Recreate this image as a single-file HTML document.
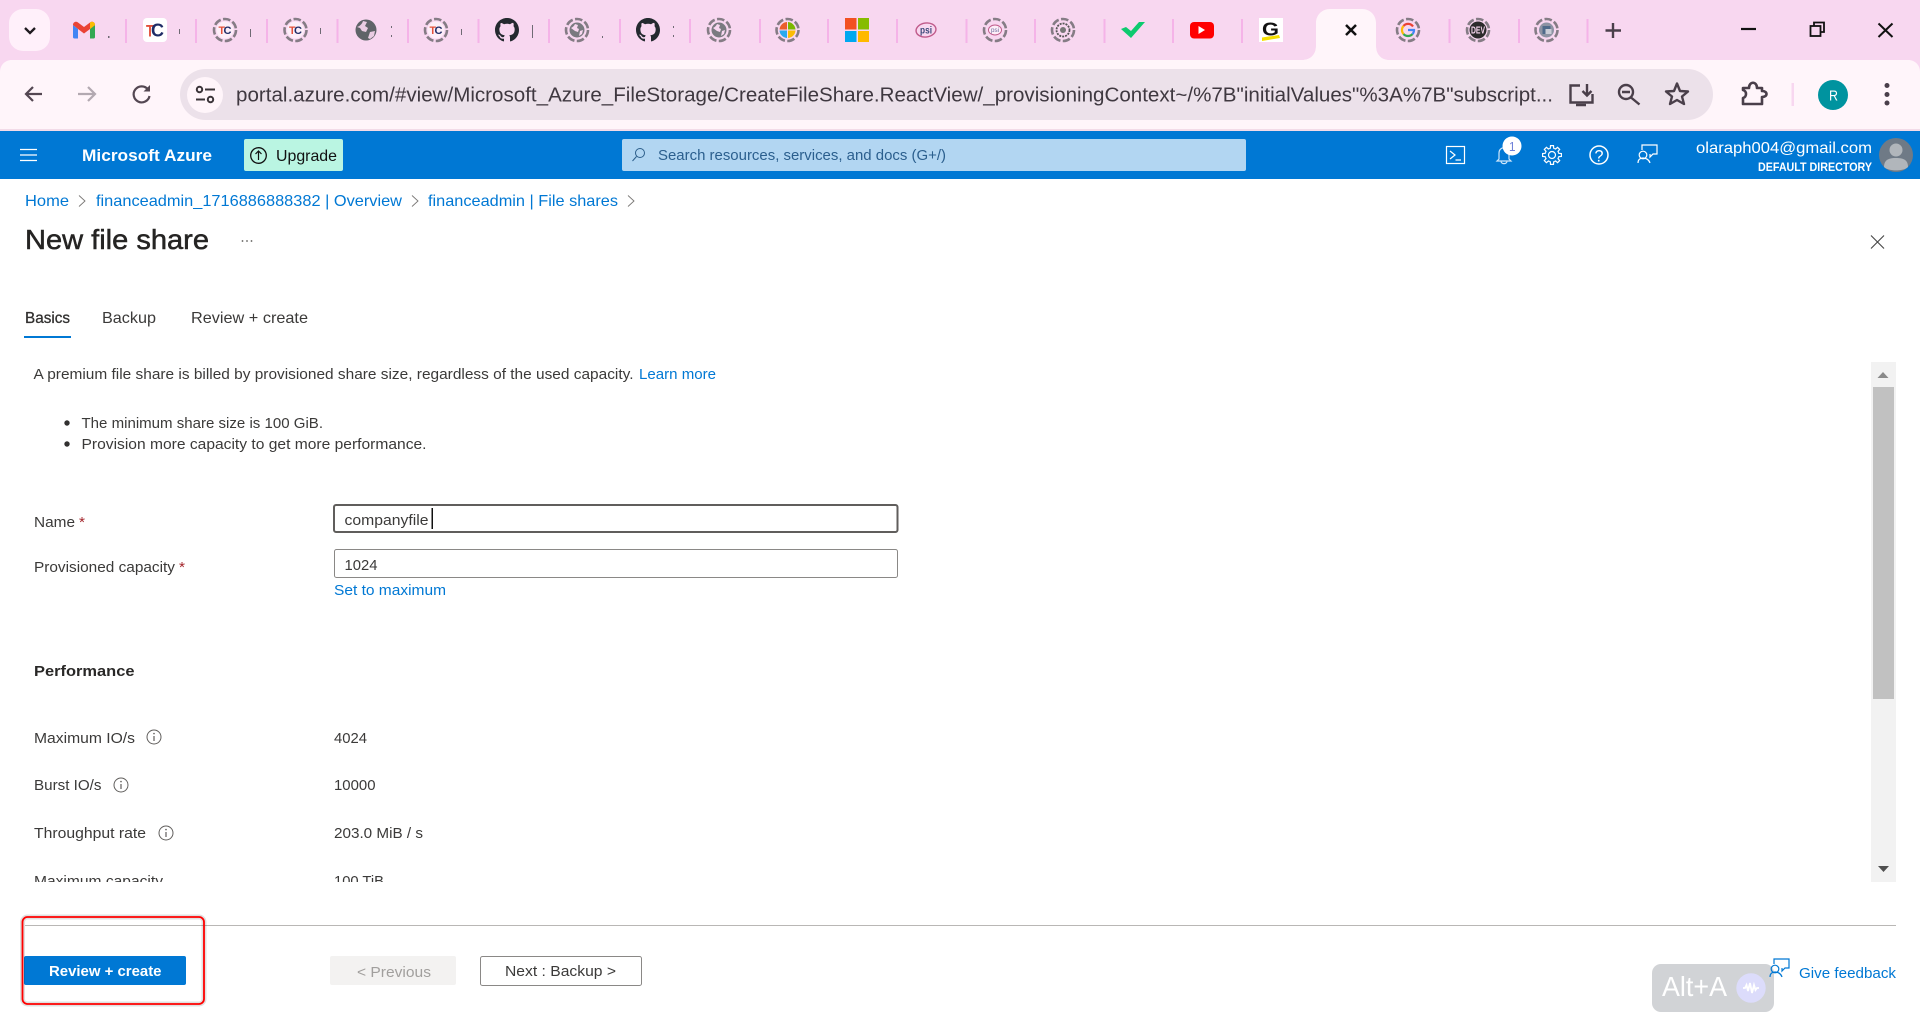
<!DOCTYPE html>
<html><head><meta charset="utf-8"><title>New file share</title>
<style>
html,body{margin:0;padding:0;background:#fff;width:1920px;height:1020px;overflow:hidden}
svg{display:block}
text{font-family:"Liberation Sans",sans-serif;fill:#3b3a39;font-size:15px}
.l{fill:#0078d4}
</style></head><body>
<svg width="1920" height="1020" viewBox="0 0 1920 1020" xmlns="http://www.w3.org/2000/svg">
<defs>
<g id="ring"><circle r="11" fill="none" stroke="#857c85" stroke-width="2.600" stroke-dasharray="7.500 2.400"/></g>
<g id="tc"><use href="#ring"/><circle r="8.500" fill="#fdeef8"/><text x="-6.500" y="4" style="font-size:11px;font-weight:bold;fill:#e2513a" textLength="6.500" lengthAdjust="spacingAndGlyphs">T</text><text x="-1.500" y="4" style="font-size:11px;font-weight:bold;fill:#1f2c66" textLength="8" lengthAdjust="spacingAndGlyphs">C</text></g>
<path id="gh" d="M8 0C3.58 0 0 3.58 0 8c0 3.54 2.29 6.53 5.47 7.59.4.07.55-.17.55-.38 0-.19-.01-.82-.01-1.49-2.01.37-2.53-.49-2.69-.94-.09-.23-.48-.94-.82-1.13-.28-.15-.68-.52-.01-.53.63-.01 1.08.58 1.23.82.72 1.21 1.87.87 2.33.66.07-.52.28-.87.51-1.07-1.78-.2-3.64-.89-3.64-3.95 0-.87.31-1.59.82-2.15-.08-.2-.36-1.02.08-2.12 0 0 .67-.21 2.2.82.64-.18 1.32-.27 2-.27.68 0 1.36.09 2 .27 1.53-1.04 2.2-.82 2.2-.82.44 1.1.16 1.92.08 2.12.51.56.82 1.27.82 2.15 0 3.07-1.87 3.75-3.65 3.95.29.25.54.73.54 1.48 0 1.07-.01 1.93-.01 2.2 0 .21.15.46.55.38A8.013 8.013 0 0016 8c0-4.42-3.58-8-8-8z" fill="#24292f"/>
<g id="globe"><circle r="10.500" fill="#5f6368"/><path d="M-9-3c3-1 5-3 6-6l4 1-2 4 3 2-2 4-4-1-2-3zM4 2l5-1-1 5-4 3-2-1z" fill="#f8d7f0" opacity=".9"/></g>
<g id="globe2"><use href="#ring"/><circle r="7.500" fill="#7a7a80"/><path d="M-6-2c2-1 3-2 4-4l3 1-1 3 2 1-1 3-3-1zM3 1l3-1-1 4-3 2z" fill="#f8d7f0"/></g>
<g id="info"><circle r="7" fill="none" stroke="#605e5c" stroke-width="1"/><path d="M0-1V4" stroke="#605e5c" stroke-width="1.200"/><circle cy="-3.400" r=".8" fill="#605e5c"/></g>
<g id="chev"><path d="M-3-5.500L3 0L-3 5.500" fill="none" stroke="#797775" stroke-width=".9"/></g>
<path id="tooth" d="M6.47-2.68L6.79-1.69L9.38-1.49L9.38 1.49L6.79 1.69L6.47 2.68" fill="none" stroke="#fff" stroke-width="1.200"/>
<g id="fb"><path d="M-3-4V-9H12V0H8L5 3V0" fill="none" stroke-width="1.200"/><circle cx="-2" cy="1" r="3.800" fill="none" stroke-width="1.200"/><path d="M-7 9c0-3.500 2.200-5 5-5s6 1.500 7 5" fill="none" stroke-width="1.200"/></g>
</defs>

<!-- tab strip -->
<rect width="1920" height="131" fill="#f8d7f0"/>
<rect x="9" y="9" width="41" height="42" rx="14" fill="#fff0fa"/>
<path d="M25 28L30 33L35 28" fill="none" stroke="#1f1a1f" stroke-width="2.300"/>

<g fill="#f5b3e8">
<rect x="125" y="19" width="2" height="24"/><rect x="195" y="19" width="2" height="24"/><rect x="266" y="19" width="2" height="24"/><rect x="336.500" y="19" width="2" height="24"/><rect x="407" y="19" width="2" height="24"/><rect x="477.500" y="19" width="2" height="24"/><rect x="548" y="19" width="2" height="24"/><rect x="619" y="19" width="2" height="24"/><rect x="689" y="19" width="2" height="24"/><rect x="759" y="19" width="2" height="24"/><rect x="827" y="19" width="2" height="24"/><rect x="896" y="19" width="2" height="24"/><rect x="965.500" y="19" width="2" height="24"/><rect x="1034" y="19" width="2" height="24"/><rect x="1103.500" y="19" width="2" height="24"/><rect x="1172" y="19" width="2" height="24"/><rect x="1241" y="19" width="2" height="24"/><rect x="1448.500" y="19" width="2" height="24"/><rect x="1518" y="19" width="2" height="24"/><rect x="1586.500" y="19" width="2" height="24"/>
</g>
<!-- clipped title fragments -->
<g fill="#6f6a74">
<rect x="108" y="36" width="1.500" height="2"/><rect x="179" y="29" width="1" height="5"/><rect x="250" y="29" width="1" height="8"/><rect x="320" y="28" width="1" height="6"/><rect x="391" y="26" width="1" height="2"/><rect x="391" y="35" width="1" height="2"/><rect x="461" y="29" width="1" height="6"/><rect x="532" y="25" width="1" height="13"/><rect x="602" y="36" width="1" height="2"/><rect x="673" y="26" width="1" height="2"/><rect x="673" y="35" width="1" height="2"/>
</g>

<!-- gmail -->
<g transform="translate(73,22)">
<path d="M0 3V15a1.500 1.500 0 001.500 1.500H5V7z" fill="#4285f4"/><path d="M17 7V16.500h3.500A1.500 1.500 0 0022 15V3z" fill="#34a853"/><path d="M0 3c0-3 3-4 5-2.500L11 5l6-4.500c2-1.500 5-.5 5 2.500L17 7l-6 4.500L5 7z" fill="#ea4335"/><path d="M17 .5C19-1 22 0 22 3l-5 4z" fill="#fbbc04"/>
</g>
<!-- TC -->
<rect x="143" y="18" width="24" height="24" rx="4" fill="#fff"/>
<text x="146" y="36.500" style="font-size:17px;font-weight:bold;fill:#e2513a" textLength="8" lengthAdjust="spacingAndGlyphs">T</text>
<text x="151" y="36.500" style="font-size:18px;font-weight:bold;fill:#1f2c66" textLength="13" lengthAdjust="spacingAndGlyphs">C</text>
<use href="#tc" x="225" y="30"/><use href="#tc" x="295.500" y="30"/>
<use href="#globe" x="366" y="30"/>
<use href="#tc" x="436" y="30"/>
<use href="#gh" transform="translate(495,18) scale(1.5)"/>
<use href="#globe2" x="577" y="30"/>
<use href="#gh" transform="translate(636,18) scale(1.5)"/>
<use href="#globe2" x="719" y="30"/>
<g transform="translate(787.500,30)"><use href="#ring"/><path d="M-.5-.5V-8A8 8 0 00-8-.5z" fill="#ea5f2c"/><path d="M.5-.5H8A8 8 0 00.5-8z" fill="#7ab800"/><path d="M-.5.5V8A8 8 0 01-8 .5z" fill="#2aa9ee"/><path d="M.5.5H8A8 8 0 01.5 8z" fill="#fbbc04"/></g>
<g><rect x="845" y="18" width="11.500" height="11.500" fill="#f25022"/><rect x="858" y="18" width="11" height="11.500" fill="#86bc00"/><rect x="845" y="31" width="11.500" height="11" fill="#00a8f0"/><rect x="858" y="31" width="11" height="11" fill="#ffb900"/></g>
<g transform="translate(926,30)"><ellipse rx="10" ry="7" fill="none" stroke="#c05a8a" stroke-width="1.400" transform="rotate(-8)"/><text x="-6" y="3.500" style="font-size:10px;fill:#3b4a7a;font-weight:bold" textLength="12" lengthAdjust="spacingAndGlyphs">psi</text></g>
<g transform="translate(995,30)"><use href="#ring"/><ellipse rx="6.500" ry="5" fill="#fdeef8" stroke="#c05a8a"/><text x="-4" y="2" style="font-size:6px;fill:#6a6a9a" textLength="8" lengthAdjust="spacingAndGlyphs">psi</text></g>
<g transform="translate(1063,30)"><use href="#ring"/><circle r="6.500" fill="none" stroke="#555" stroke-width="1.800" stroke-dasharray="2 1"/><circle r="3" fill="#777"/></g>
<path d="M1121 29L1126 27L1131 31L1139 22H1145L1131 38z" fill="#0dca6f"/>
<g><rect x="1190" y="22" width="24" height="16.500" rx="4" fill="#f00"/><path d="M1198.500 26v8l6.500-4z" fill="#fff"/></g>
<g><rect x="1259" y="18" width="24" height="24" fill="#fff"/><text x="1262" y="35.500" style="font-size:18px;font-weight:bold;fill:#111" textLength="17" lengthAdjust="spacingAndGlyphs">G</text><path d="M1262 37.500l17-2.500 1 3-18 3z" fill="#f5e000"/></g>

<!-- active tab -->
<path d="M1302 60c8 0 14-5 14-14V23c0-8 6-14 14-14h32c8 0 14 6 14 14V46c0 9 6 14 13 14z" fill="#fff5fa"/>
<path d="M1346 25l10 10M1356 25l-10 10" stroke="#111" stroke-width="2.500"/>

<use href="#ring" x="1408" y="30"/>
<g transform="translate(1408,30)" fill="none" stroke-width="2.200"><path d="M5-3.500A6 6 0 00-4.500-4" stroke="#ea4335"/><path d="M-4.500-4A6 6 0 00-4.500 4" stroke="#fbbc05"/><path d="M-4.500 4A6 6 0 004.500 4" stroke="#34a853"/><path d="M4.500 4C5.500 3 6 1.500 6 0H0" stroke="#4285f4"/></g>
<g transform="translate(1478,30)"><use href="#ring"/><circle r="8.500" fill="#2b2b2b"/><text x="-7" y="3.500" style="font-size:10px;font-weight:bold;fill:#f8d7f0" textLength="14" lengthAdjust="spacingAndGlyphs">DEV</text></g>
<g transform="translate(1546.500,30)"><use href="#ring"/><circle r="7.500" fill="#8d93a3"/><rect x="-4" y="-4" width="8" height="8" fill="#4f6a8a"/><rect x="-1" y="-1" width="6" height="5" fill="#c9ccd6"/></g>
<path d="M1605.500 30.500H1621M1613 23V38" stroke="#4a3f4a" stroke-width="2.400"/>
<!-- window controls -->
<path d="M1741 29H1756" stroke="#111" stroke-width="2.200"/>
<path d="M1814 26V22.500H1824V32H1820.500" fill="none" stroke="#111" stroke-width="1.800"/><rect x="1810.500" y="26" width="10" height="10" fill="none" stroke="#111" stroke-width="1.800"/>
<path d="M1878.500 23.500L1892.500 37M1892.500 23.500L1878.500 37" stroke="#111" stroke-width="2"/>

<!-- toolbar -->
<path d="M0 72C0 65 5 60 12 60H1908C1915 60 1920 65 1920 72V129H0z" fill="#fff5fa"/>
<path d="M1302 60c8 0 14-5 14-14V40h60v6c0 9 6 14 13 14z" fill="#fff5fa"/>
<rect y="129" width="1920" height="2" fill="#f3dbe8"/>
<path d="M42 94H26M33 87L26 94L33 101" fill="none" stroke="#544752" stroke-width="2.200"/>
<path d="M78 94H95M88 87L95 94L88 101" fill="none" stroke="#b3a9b1" stroke-width="2.200"/>
<path d="M148 89.500A8 8 0 10149.500 96" fill="none" stroke="#544752" stroke-width="2.200"/><path d="M150 85V91.500H143.500z" fill="#544752"/>
<rect x="180" y="69" width="1533" height="51" rx="25.500" fill="#ece1ea"/>
<circle cx="205" cy="95" r="18" fill="#fff5fa"/>
<g fill="none" stroke="#3a3338" stroke-width="2"><circle cx="199.500" cy="89.500" r="2.700"/><path d="M205 89.500H215"/><circle cx="210.500" cy="99.500" r="2.700"/><path d="M196 99.500H205"/></g>
<text x="236" y="101.500" style="font-size:20px;fill:#3f3840" textLength="1317" lengthAdjust="spacingAndGlyphs">portal.azure.com/#view/Microsoft_Azure_FileStorage/CreateFileShare.ReactView/_provisioningContext~/%7B"initialValues"%3A%7B"subscript...</text>
<g fill="none" stroke="#4a3f4a" stroke-width="2.400">
<path d="M1580 85.500H1570.500V102.500H1592.500V94"/><path d="M1587 84V95M1582.500 91L1587 95.500L1591.500 91"/>
<circle cx="1626" cy="92" r="7"/><path d="M1631 97.500L1639.500 104.500M1622 92H1630"/>
<path d="M1677 83.500L1680 91L1688 91.500L1682 96.500L1684 104L1677 100L1670 104L1672 96.500L1666 91.500L1674 91z" stroke-linejoin="round"/>
<path d="M1743 88H1749C1749 81 1757 81 1757 88H1762V91C1768 91 1768 97 1762 97V104H1743V98C1747 97 1747 91 1743 90z" stroke-width="2.600" stroke-linejoin="round"/>
</g>
<path d="M1576 105H1586" stroke="#4a3f4a" stroke-width="2.500"/>
<rect x="1791.500" y="83" width="2.500" height="23" fill="#f8d7f0"/>
<circle cx="1833" cy="95" r="15" fill="#00939f"/>
<text x="1829" y="100.500" style="font-size:15px;fill:#fff" textLength="9" lengthAdjust="spacingAndGlyphs">R</text>
<g fill="#4a3f4a"><circle cx="1887" cy="85.500" r="2.500"/><circle cx="1887" cy="94.500" r="2.500"/><circle cx="1887" cy="103" r="2.500"/></g>

<!-- azure bar -->
<rect y="131" width="1920" height="48" fill="#0078d4"/>
<path d="M20 149.500H37M20 155H37M20 160.500H37" stroke="#fff" stroke-width="1.200"/>
<text x="82" y="161" style="font-size:16.500px;font-weight:bold;fill:#fff" textLength="130" lengthAdjust="spacingAndGlyphs">Microsoft Azure</text>
<rect x="244" y="139" width="99" height="32" rx="2" fill="#baf5e2"/>
<circle cx="258.500" cy="155.500" r="7.800" fill="none" stroke="#111" stroke-width="1.300"/><path d="M258.500 160V151.500M255.500 154L258.500 151L261.500 154" fill="none" stroke="#111" stroke-width="1.200"/>
<text x="276" y="161" style="font-size:16px;fill:#111" textLength="61" lengthAdjust="spacingAndGlyphs">Upgrade</text>
<rect x="622" y="139" width="624" height="32" rx="2" fill="#b2d6f2"/>
<circle cx="640" cy="153" r="4.500" fill="none" stroke="#2d5f8b" stroke-width="1"/><path d="M636.500 156.500L632.500 161" stroke="#2d5f8b" stroke-width="1"/>
<text x="658" y="160" style="font-size:15px;fill:#2b5f8e" textLength="288" lengthAdjust="spacingAndGlyphs">Search resources, services, and docs (G+/)</text>
<rect x="1446.500" y="146.500" width="18" height="17" fill="none" stroke="#fff" stroke-width="1.200"/>
<path d="M1450 151L1455 155L1450 159M1455.500 160H1461" fill="none" stroke="#fff" stroke-width="1.200"/>
<path d="M1499 159V153C1499 146 1509 146 1509 153V159L1511 161H1497zM1501 161C1501 164.500 1507 164.500 1507 161" fill="none" stroke="#cfe6fa" stroke-width="1.200"/>
<circle cx="1512" cy="146" r="9.500" fill="#fff"/>
<text x="1509" y="151" style="font-size:13px;fill:#6d7fd8" textLength="6.500" lengthAdjust="spacingAndGlyphs">1</text>
<g transform="translate(1552,155)">
<use href="#tooth"/><use href="#tooth" transform="rotate(45)"/><use href="#tooth" transform="rotate(90)"/><use href="#tooth" transform="rotate(135)"/><use href="#tooth" transform="rotate(180)"/><use href="#tooth" transform="rotate(225)"/><use href="#tooth" transform="rotate(270)"/><use href="#tooth" transform="rotate(315)"/>
<circle r="3.500" fill="none" stroke="#fff" stroke-width="1.200"/>
</g>
<circle cx="1599" cy="155" r="9" fill="none" stroke="#fff" stroke-width="1.500"/>
<text x="1594.500" y="161.500" style="font-size:17px;fill:#fff" textLength="9" lengthAdjust="spacingAndGlyphs">?</text>
<use href="#fb" x="1645" y="154" stroke="#fff"/>
<text x="1696" y="153" style="font-size:16px;fill:#fff" textLength="176" lengthAdjust="spacingAndGlyphs">olaraph004@gmail.com</text>
<text x="1758" y="171" style="font-size:12px;font-weight:bold;fill:#fff" textLength="114" lengthAdjust="spacingAndGlyphs">DEFAULT DIRECTORY</text>
<circle cx="1896" cy="155" r="17" fill="#6f7a86"/>
<circle cx="1896" cy="150" r="6.500" fill="#b1b6bb"/>
<path d="M1884 167C1884 159 1890 158 1896 158S1908 159 1908 167C1904 171.500 1888 171.500 1884 167z" fill="#b1b6bb"/>

<!-- breadcrumb -->
<text class="l" x="25" y="206" style="font-size:16px" textLength="44" lengthAdjust="spacingAndGlyphs">Home</text>
<use href="#chev" x="82" y="201"/>
<text class="l" x="96" y="206" style="font-size:16px" textLength="306" lengthAdjust="spacingAndGlyphs">financeadmin_1716886888382 | Overview</text>
<use href="#chev" x="415" y="201"/>
<text class="l" x="428" y="206" style="font-size:16px" textLength="190" lengthAdjust="spacingAndGlyphs">financeadmin | File shares</text>
<use href="#chev" x="631" y="201"/>

<text x="25" y="249" style="font-size:28px;fill:#252423;stroke:#252423;stroke-width:.5" textLength="184" lengthAdjust="spacingAndGlyphs">New file share</text>
<g fill="#605e5c"><circle cx="242.500" cy="241" r=".9"/><circle cx="247" cy="241" r=".9"/><circle cx="251.500" cy="241" r=".9"/></g>
<path d="M1871 235.500L1884 248.500M1884 235.500L1871 248.500" stroke="#444" stroke-width="1.100"/>

<!-- tabs -->
<text x="25" y="323" style="font-size:16px;fill:#323130;stroke:#323130;stroke-width:.3" textLength="45" lengthAdjust="spacingAndGlyphs">Basics</text>
<text x="102" y="323" style="font-size:16px" textLength="54" lengthAdjust="spacingAndGlyphs">Backup</text>
<text x="191" y="323" style="font-size:16px" textLength="117" lengthAdjust="spacingAndGlyphs">Review + create</text>
<rect x="24" y="336" width="47" height="2" fill="#0078d4"/>

<!-- body -->
<text x="33.500" y="379" textLength="600" lengthAdjust="spacingAndGlyphs">A premium file share is billed by provisioned share size, regardless of the used capacity.</text>
<text class="l" x="639" y="379" textLength="77" lengthAdjust="spacingAndGlyphs">Learn more</text>
<circle cx="67" cy="423" r="2.700" fill="#323130"/>
<text x="81.500" y="428" textLength="241.500" lengthAdjust="spacingAndGlyphs">The minimum share size is 100 GiB.</text>
<circle cx="67" cy="444" r="2.700" fill="#323130"/>
<text x="81.500" y="449" textLength="345" lengthAdjust="spacingAndGlyphs">Provision more capacity to get more performance.</text>

<text x="34" y="527" textLength="41" lengthAdjust="spacingAndGlyphs">Name</text>
<text x="79" y="527" style="fill:#a4262c" textLength="6" lengthAdjust="spacingAndGlyphs">*</text>
<rect x="334" y="505" width="563.500" height="27" rx="2" fill="#fff" stroke="#605e5c" stroke-width="2"/>
<text x="344.500" y="525" textLength="84" lengthAdjust="spacingAndGlyphs">companyfile</text>
<rect x="431.500" y="508" width="1.500" height="21" fill="#111"/>

<text x="34" y="572" textLength="141" lengthAdjust="spacingAndGlyphs">Provisioned capacity</text>
<text x="179" y="572" style="fill:#a4262c" textLength="6" lengthAdjust="spacingAndGlyphs">*</text>
<rect x="334.500" y="549.500" width="563" height="28" rx="2" fill="#fff" stroke="#8a8886"/>
<text x="344.500" y="570" textLength="33" lengthAdjust="spacingAndGlyphs">1024</text>
<text class="l" x="334" y="595" textLength="112" lengthAdjust="spacingAndGlyphs">Set to maximum</text>

<text x="34" y="676" style="font-weight:bold;fill:#292827" textLength="100.500" lengthAdjust="spacingAndGlyphs">Performance</text>

<text x="34" y="743" textLength="101" lengthAdjust="spacingAndGlyphs">Maximum IO/s</text><use href="#info" x="154" y="737"/>
<text x="334" y="743" textLength="33" lengthAdjust="spacingAndGlyphs">4024</text>
<text x="34" y="790" textLength="67.500" lengthAdjust="spacingAndGlyphs">Burst IO/s</text><use href="#info" x="121" y="785"/>
<text x="334" y="790" textLength="41.500" lengthAdjust="spacingAndGlyphs">10000</text>
<text x="34" y="838" textLength="112" lengthAdjust="spacingAndGlyphs">Throughput rate</text><use href="#info" x="166" y="833"/>
<text x="334" y="838" textLength="89" lengthAdjust="spacingAndGlyphs">203.0 MiB / s</text>
<text x="34" y="886" textLength="129" lengthAdjust="spacingAndGlyphs">Maximum capacity</text>
<text x="334" y="886" textLength="50" lengthAdjust="spacingAndGlyphs">100 TiB</text>
<rect x="0" y="882" width="1860" height="14" fill="#fff"/>

<!-- scrollbar -->
<rect x="1871" y="362" width="25" height="520" fill="#f2f2f2"/>
<path d="M1877.500 378H1888.500L1883 372z" fill="#8a8a8a"/>
<rect x="1873" y="387" width="21" height="312" fill="#c1c1c1"/>
<path d="M1878 866H1889L1883.500 872z" fill="#505050"/>

<!-- footer -->
<rect x="25" y="925" width="1871" height="1" fill="#b9b7b5"/>
<rect x="24" y="956" width="162" height="29" rx="2" fill="#0078d4"/>
<text x="49" y="976" style="font-size:15px;font-weight:bold;fill:#fff" textLength="112.500" lengthAdjust="spacingAndGlyphs">Review + create</text>
<rect x="330" y="956" width="126" height="29" rx="2" fill="#f3f2f1"/>
<text x="357" y="977" style="fill:#a19f9d" textLength="74" lengthAdjust="spacingAndGlyphs">&lt; Previous</text>
<rect x="480.500" y="956.500" width="161" height="29" rx="2" fill="#fff" stroke="#8a8886"/>
<text x="505" y="976" textLength="111" lengthAdjust="spacingAndGlyphs">Next : Backup &gt;</text>

<!-- red highlight -->
<rect x="22.500" y="917" width="181.500" height="87" rx="5" fill="none" stroke="#000" stroke-opacity=".12" stroke-width="5"/>
<rect x="22.500" y="917" width="181.500" height="87" rx="5" fill="none" stroke="#f00" stroke-width="1.800"/>

<!-- Alt+A -->
<rect x="1652" y="964" width="122" height="48" rx="9" fill="#d1d3d6"/>
<text x="1662" y="996" style="font-size:28px;fill:#fff" textLength="65" lengthAdjust="spacingAndGlyphs">Alt+A</text>
<circle cx="1751" cy="988" r="14.700" fill="#dcdcfb"/>
<path d="M1743 988H1745L1746.500 985L1748 991L1750 983L1752 993L1754 985L1755.500 990L1757 988H1759" fill="none" stroke="#fff" stroke-width="1.800"/>

<use href="#fb" x="1777" y="968" stroke="#0078d4"/>
<text class="l" x="1799" y="978" textLength="97" lengthAdjust="spacingAndGlyphs">Give feedback</text>
</svg>
</body></html>
